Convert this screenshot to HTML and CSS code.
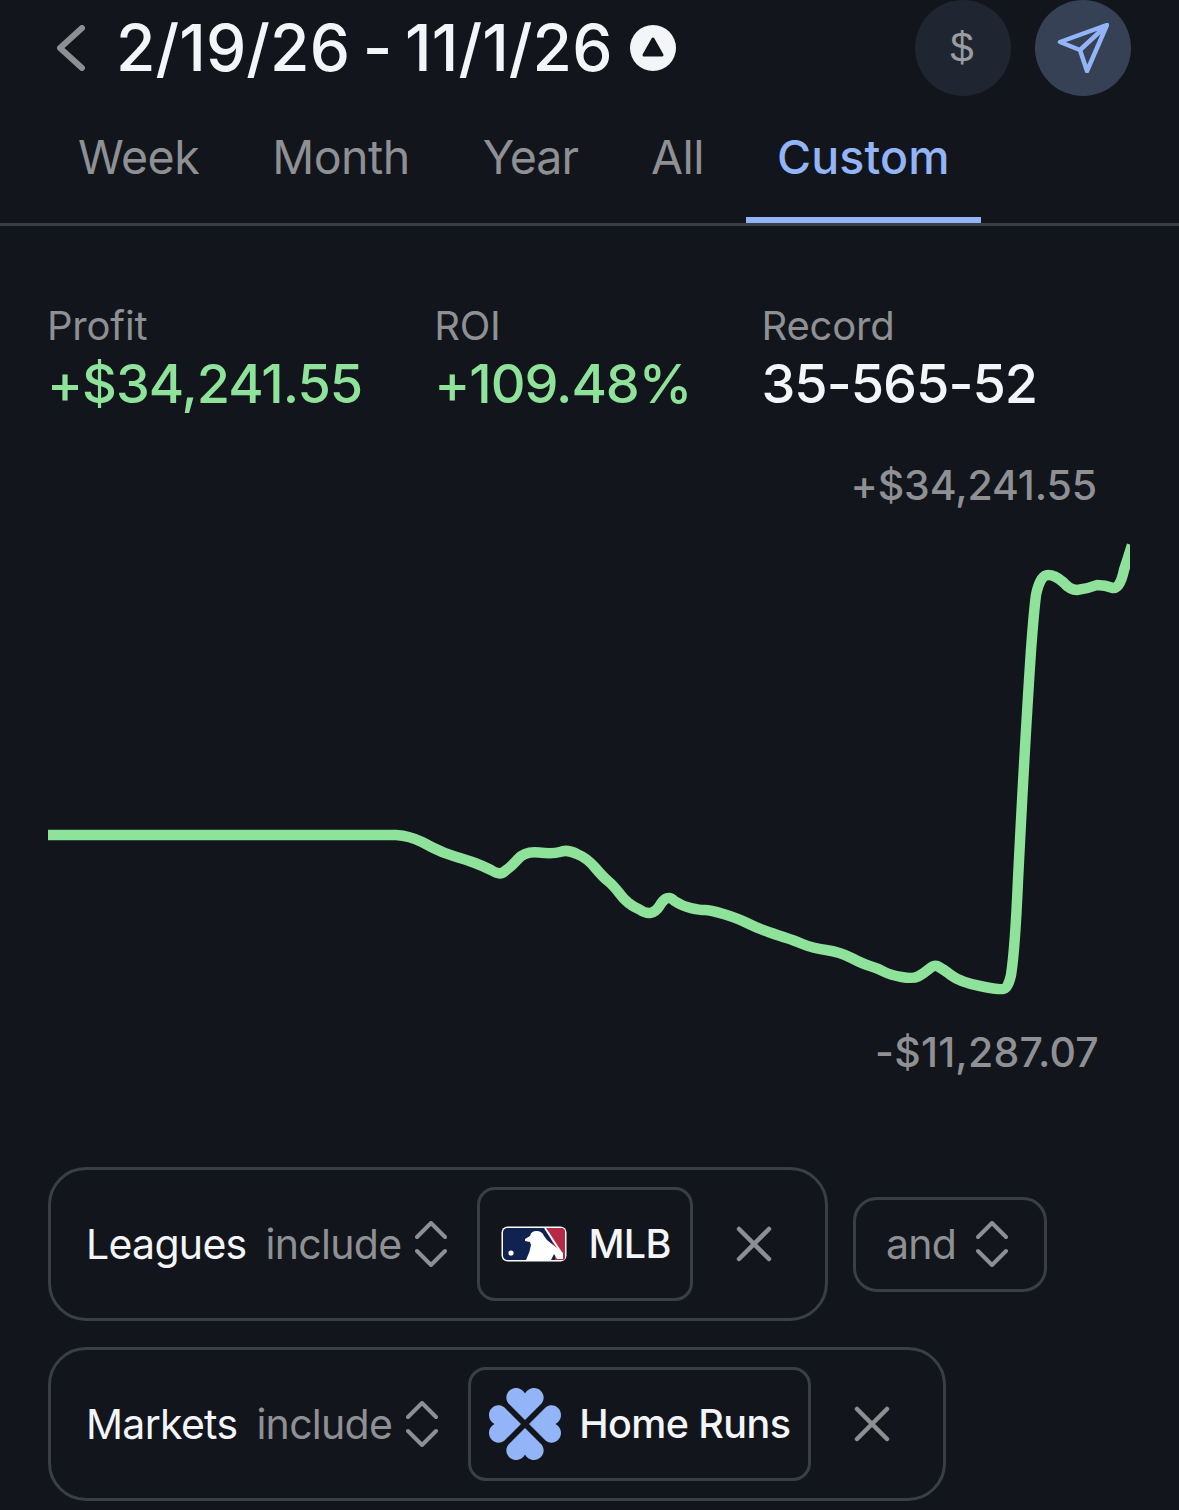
FILE: index.html
```html
<!DOCTYPE html>
<html lang="en">
<head>
<meta charset="utf-8">
<title>Custom range</title>
<link rel="stylesheet" href="styles.css">
</head>
<body>
<main class="page">
  <header class="header">
    <svg class="back" viewBox="0 0 28 46"><path d="M25 3 L3 23 L25 43"/></svg>
    <h1 class="title">2/19/26 - 11/1/26</h1>
    <svg class="caret" viewBox="0 0 46 46"><circle cx="23" cy="23" r="23"/><path d="M23 14 L32 30 H14 Z"/></svg>
    <div class="actions">
      <div class="round round-dark">$</div>
      <div class="round round-blue">
        <svg class="send" viewBox="0 0 52 50"><path d="M50 2 L3 19 L23 27 L30 48 Z M50 2 L23 27"/></svg>
      </div>
    </div>
  </header>
  <nav class="tabs">
    <a class="tab">Week</a>
    <a class="tab">Month</a>
    <a class="tab tab-tight">Year</a>
    <a class="tab">All</a>
    <a class="tab tab-active">Custom</a>
  </nav>
  <section class="stats">
    <div class="stat stat-first"><div class="stat-label">Profit</div><div class="stat-value green">+$34,241.55</div></div>
    <div class="stat"><div class="stat-label">ROI</div><div class="stat-value green">+109.48%</div></div>
    <div class="stat"><div class="stat-label">Record</div><div class="stat-value">35-565-52</div></div>
  </section>
  <section class="chart">
    <div class="chart-label">+$34,241.55</div>
    <svg class="chart-svg" viewBox="48 520 1082 490">
      <path d="M48 835 H396 Q410 836 422 842 L432.5 847.5 Q443 853 455 856.5 Q467 860 475 863 Q483 866 491 870 Q500 876 505 871 Q512 866 518 859 Q525 851 539 852.5 Q553 854 560 852 Q567 849 577 854 Q587 858 595 867.5 Q603 877 608 881 Q613 885 620 894 Q627 904 639.5 909.5 Q652 918 659.5 906 Q667 893 674.5 901 Q682 906 691 908 Q700 910 705 910 Q710 910 723.5 914 Q737 918 747 923 Q757 928 768.5 932 Q780 936 786.5 938 Q793 940 802.5 944 Q812 948 826 950 Q840 952 851.5 958 Q863 964 870 966 Q877 968 883.5 971.5 Q890 975 901.5 977 Q913 979 918 976.5 Q923 974 929 969 Q935 964 939 967 Q943 969 951.5 975.5 Q960 982 980 986 Q1000 990 1003 989 Q1008 989 1011 975 Q1015 950 1018 880 Q1025 740 1031 650 Q1034 610 1036 595 Q1040 575 1048 575 Q1055 575 1063 582 Q1070 590 1077 590 Q1087 589 1097 585 Q1105 585 1113 588 Q1120 589 1124 570 Q1128 558 1132 545"/>
    </svg>
    <div class="chart-label chart-label-low">-$11,287.07</div>
  </section>
  <section class="filters">
    <div class="filter">
      <span class="filter-name">Leagues</span>
      <span class="filter-op">include</span>
      <svg class="updown" viewBox="0 0 32 46"><path d="M2 16 L16 2 L30 16 M2 30 L16 44 L30 30"/></svg>
      <div class="chip chip-mlb">
        <svg class="mlb" viewBox="0 0 66 36">
          <rect x="0.5" y="0.5" width="65" height="35" rx="6" fill="#fff"/>
          <rect x="2" y="2" width="62" height="32" rx="4.5" fill="#10224f"/>
          <path d="M46 2 H60 Q64 2 64 6 V32 Q64 34 61 34 H54 V24 Z" fill="#b62a46"/>
          <circle cx="10" cy="27" r="2.6" fill="#fff"/>
          <path d="M44 2 L61 28" stroke="#fff" stroke-width="2" fill="none"/>
          <path d="M24 13 L29 10 Q30 5 35.5 5 Q41 5 43 10 L46 14 L62 27 V33 H56 L53 28 L50 34 H25 Q29 26 30 19 L29 16 L24 15 Z" fill="#fff"/>
        </svg>
        <span class="chip-text">MLB</span>
      </div>
      <svg class="close" viewBox="0 0 36 36"><path d="M3 3 L33 33 M33 3 L3 33"/></svg>
    </div>
    <div class="joiner">
      <span class="filter-op">and</span>
      <svg class="updown updown-wide" viewBox="0 0 32 46"><path d="M2 16 L16 2 L30 16 M2 30 L16 44 L30 30"/></svg>
    </div>
    <div class="filter">
      <span class="filter-name">Markets</span>
      <span class="filter-op">include</span>
      <svg class="updown" viewBox="0 0 32 46"><path d="M2 16 L16 2 L30 16 M2 30 L16 44 L30 30"/></svg>
      <div class="chip chip-market">
        <svg class="clover" viewBox="0 0 72 72">
          <defs><path id="heart" d="M36 32 L19.5 15.5 C14 8 20 0 27 0 C31 0 34.5 2.5 36 5.5 C37.5 2.5 41 0 45 0 C52 0 58 8 52.5 15.5 Z"/></defs>
          <use href="#heart"/>
          <use href="#heart" transform="rotate(90 36 36)"/>
          <use href="#heart" transform="rotate(180 36 36)"/>
          <use href="#heart" transform="rotate(270 36 36)"/>
        </svg>
        <span class="chip-text">Home Runs</span>
      </div>
      <svg class="close" viewBox="0 0 36 36"><path d="M3 3 L33 33 M33 3 L3 33"/></svg>
    </div>
  </section>
</main>
</body>
</html>
```
FILE: styles.css
```css
* { box-sizing: border-box; }
html, body { margin: 0; padding: 0; background: #12161c; }
body { width: 1179px; height: 1510px; overflow: hidden; font-family: Inter, "Liberation Sans", sans-serif; color: #f3f5f9; }
.page { display: flex; flex-direction: column; }
.header { display: flex; align-items: center; height: 96px; padding: 0 48px 0 57px; }
.back { width: 28px; height: 46px; fill: none; stroke: #8d8f93; stroke-width: 6; stroke-linecap: round; stroke-linejoin: round; }
.title { margin: 0 0 0 31px; font-size: 64px; font-weight: 500; letter-spacing: 0.1px; word-spacing: -4.5px; line-height: 96px; white-space: nowrap; }
.caret { width: 46px; height: 46px; margin-left: 17px; }
.caret circle { fill: #f3f5f9; }
.caret path { fill: #12161c; stroke: #12161c; stroke-width: 3; stroke-linejoin: round; }
.actions { display: flex; gap: 24px; margin-left: auto; }
.round { width: 96px; height: 96px; border-radius: 50%; display: flex; align-items: center; justify-content: center; }
.round-dark { background: #1f2631; color: #9a9ca0; font-family: "Liberation Sans", sans-serif; font-size: 42px; padding-right: 2px; }
.round-blue { background: #374155; }
.send { width: 52px; height: 50px; fill: none; stroke: #93b5f8; stroke-width: 4.5; stroke-linejoin: round; stroke-linecap: round; }
.tabs { display: flex; gap: 11px; padding-left: 47px; height: 130px; border-bottom: 3px solid #3a3e47; }
.tab { display: flex; align-items: center; padding: 0 31px; height: 127px; font-size: 46.5px; color: #8e9094; letter-spacing: -0.5px; border-bottom: 6px solid transparent; }
.tab-tight { letter-spacing: -1px; }
.tab-active { color: #93b5f8; border-bottom-color: #93b5f8; font-weight: 500; letter-spacing: 0.1px; }
.stats { display: flex; gap: 70px; padding: 74px 0 0 47px; }
.stat-first { margin-right: 2px; }
.stat-label { font-size: 40px; line-height: 52px; color: #8e9094; letter-spacing: -0.2px; }
.stat-value { font-size: 54px; line-height: 64px; font-weight: 500; letter-spacing: -1px; white-space: nowrap; }
.green { color: #8fe29a; }
.chart { display: flex; flex-direction: column; padding: 45px 0 0 48px; }
.chart-label { font-size: 41px; line-height: 48px; font-weight: 500; color: #8e9094; letter-spacing: -0.1px; text-align: right; padding-right: 82px; }
.chart-label-low { margin-top: 18px; padding-right: 80px; letter-spacing: 0.2px; }
.chart-svg { display: block; width: 1082px; height: 490px; margin-top: 11px; overflow: hidden; }
.chart-svg path { fill: none; stroke: #8fe29a; stroke-width: 10.5; stroke-linejoin: round; }
.filters { display: flex; flex-wrap: wrap; align-items: center; column-gap: 25px; row-gap: 26px; padding: 91px 0 0 48px; }
.filter { display: flex; align-items: center; height: 154px; padding: 0 53px 0 35px; border: 3px solid #3a3e47; border-radius: 38px; }
.filter-name { font-size: 41px; color: #f3f5f9; letter-spacing: -0.7px; }
.filter-op { font-size: 41px; color: #8e9094; letter-spacing: -0.7px; margin-left: 19px; }
.updown { width: 32px; height: 46px; margin-left: 14px; fill: none; stroke: #8d8f93; stroke-width: 4; stroke-linecap: round; stroke-linejoin: round; }
.updown-wide { margin-left: 20px; }
.chip { display: flex; align-items: center; height: 114px; margin-left: 30px; border: 3px solid #3a3e47; border-radius: 18px; }
.chip-mlb { padding: 0 19px 0 21px; gap: 21px; }
.chip-market { padding: 0 18px; gap: 18px; }
.mlb { width: 66px; height: 36px; }
.clover { width: 72px; height: 72px; fill: #93b5f8; }
.chip-text { font-size: 39.5px; font-weight: 500; color: #f3f5f9; letter-spacing: -0.6px; white-space: nowrap; }
.close { width: 36px; height: 36px; margin-left: 43px; fill: none; stroke: #8d8f93; stroke-width: 4.5; stroke-linecap: round; }
.joiner { display: flex; align-items: center; height: 95px; padding: 0 36px 0 11px; border: 3px solid #3a3e47; border-radius: 24px; }
```
